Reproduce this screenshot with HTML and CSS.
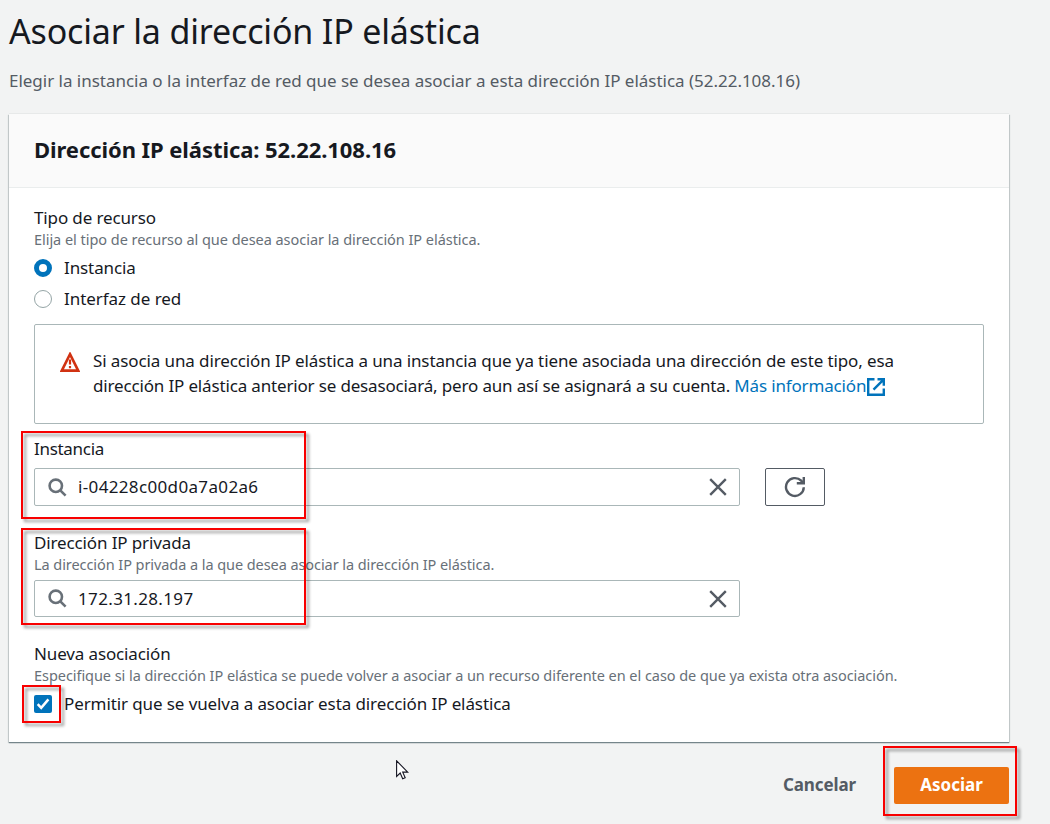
FILE: index.html
```html
<!DOCTYPE html>
<html lang="es">
<head>
<meta charset="utf-8">
<title>Asociar la dirección IP elástica</title>
<link rel="stylesheet" href="styles.css">
</head>
<body>
<main class="page">
  <h1 class="title"><span>Asociar la dirección IP elástica</span></h1>
  <p class="subtitle"><span>Elegir la instancia o la interfaz de red que se desea asociar a esta dirección IP elástica (52.22.108.16)</span></p>

  <section class="card">
    <header class="card-header"><h2><span>Dirección IP elástica: 52.22.108.16</span></h2></header>
    <div class="card-body">
      <div class="label"><span>Tipo de recurso</span></div>
      <div class="hint"><span>Elija el tipo de recurso al que desea asociar la dirección IP elástica.</span></div>
      <div class="option"><i class="radio radio-on"></i><span>Instancia</span></div>
      <div class="option"><i class="radio"></i><span>Interfaz de red</span></div>

      <div class="alert">
        <svg class="alert-icon" width="20" height="20" viewBox="0 0 20 20"><path d="M10 2.2 18.2 18.6H1.8Z" fill="none" stroke="#d13212" stroke-width="2.6"/><path d="M10 7.5v5M10 14v2.3" stroke="#d13212" stroke-width="2.2"/></svg>
        <p class="alert-text"><span class="line1">Si asocia una dirección IP elástica a una instancia que ya tiene asociada una dirección de este tipo, esa</span><br><span class="line2">dirección IP elástica anterior se desasociará, pero aun así se asignará a su cuenta. </span><a class="link"><span>Más información</span><svg width="18" height="18" viewBox="0 0 18 18" fill="none" stroke="#0073bb" stroke-width="2.4"><path d="M7.5 1.3H1.2v15.5h15.6v-6.3"/><path d="M10.5 1.3h6.3v6.4M16.5 1.6 6.5 11.6"/></svg></a></p>
      </div>

      <div class="label label-instance"><span>Instancia</span></div>
      <div class="input-row">
        <div class="input">
          <svg class="search" width="19" height="19" viewBox="0 0 19 19" fill="none" stroke="#687078" stroke-width="2.6"><circle cx="7.8" cy="7.8" r="6.2"/><path d="m12.3 12.3 5.3 5.3"/></svg>
          <span class="value value-id">i-04228c00d0a7a02a6</span>
          <svg class="clear" width="18" height="18" viewBox="0 0 18 18" stroke="#545b64" stroke-width="2.4"><path d="m1.2 1.2 15.6 15.6M16.8 1.2 1.2 16.8"/></svg>
        </div>
        <button class="refresh"><svg width="22" height="22" viewBox="0 0 22 22" fill="none" stroke="#545b64" stroke-width="2.4"><path d="M19.8 11.2a8.9 8.9 0 1 1-2.6-6.5l1.8 2"/><path d="M19.8 1v6.2h-7"/></svg></button>
      </div>

      <div class="label label-private"><span>Dirección IP privada</span></div>
      <div class="hint hint-private"><span>La dirección IP privada a la que desea asociar la dirección IP elástica.</span></div>
      <div class="input input-private">
        <svg class="search" width="19" height="19" viewBox="0 0 19 19" fill="none" stroke="#687078" stroke-width="2.6"><circle cx="7.8" cy="7.8" r="6.2"/><path d="m12.3 12.3 5.3 5.3"/></svg>
        <span class="value value-ip">172.31.28.197</span>
        <svg class="clear" width="18" height="18" viewBox="0 0 18 18" stroke="#545b64" stroke-width="2.4"><path d="m1.2 1.2 15.6 15.6M16.8 1.2 1.2 16.8"/></svg>
      </div>

      <div class="label label-new"><span>Nueva asociación</span></div>
      <div class="hint hint-new"><span>Especifique si la dirección IP elástica se puede volver a asociar a un recurso diferente en el caso de que ya exista otra asociación.</span></div>
      <div class="option option-check"><svg class="checkbox" width="18" height="18" viewBox="0 0 18 18"><rect width="18" height="18" rx="2" fill="#0073bb"/><path d="m3.7 9.2 3.5 3.6 7.2-8.4" fill="none" stroke="#fff" stroke-width="2.5"/></svg><span>Permitir que se vuelva a asociar esta dirección IP elástica</span></div>
    </div>
  </section>

  <footer class="actions">
    <a class="cancel"><span>Cancelar</span></a>
    <button class="primary"><span>Asociar</span></button>
  </footer>
</main>

<div class="mark mark-instance"></div>
<div class="mark mark-private"></div>
<div class="mark mark-check"></div>
<div class="mark mark-submit"></div>
<svg class="cursor" width="13" height="20" viewBox="0 0 13 20"><path d="M.6.8v15.6l3.6-3.4 2.5 5.8 2.5-1-2.5-5.7h5Z" fill="#fff" stroke="#151522" stroke-width="1.1"/></svg>
</body>
</html>
```
FILE: styles.css
```css
* { box-sizing: border-box; }
body {
  margin: 0;
  height: 824px;
  overflow: hidden;
  background: #f2f3f3;
  color: #16191f;
  font: 17px/22px "Noto Sans", sans-serif;
  white-space: nowrap;
}
h1, h2, p { margin: 0; font-weight: 400; }
button { font: inherit; padding: 0; cursor: pointer; }
svg { display: block; flex: none; }

.page { width: 1009px; padding-left: 9px; }
.title { height: 62px; font-size: 34px; line-height: 62px; letter-spacing: -0.17px; }
.subtitle { height: 52px; padding-top: 8px; color: #545b64; letter-spacing: -0.02px; }

.card {
  height: 628px;
  background: #fff;
  box-shadow: 0 1px 1px #75858a, 1px 1px 1px #d0d5d5, -1px 1px 1px #d0d5d5, 0 -1px 0 #e7e9e9;
}
.card-header { height: 74px; background: #fafafa; border-bottom: 1px solid #eaeded; padding: 21px 25px 0; }
.card-header h2 { font-size: 22px; line-height: 28px; font-weight: 700; letter-spacing: -0.07px; }
.card-body { padding: 19px 25px 0; }

.label { letter-spacing: -0.13px; }
.hint { height: 22px; line-height: 20px; color: #687078; font-size: 14.5px; letter-spacing: -0.04px; }
.hint-private { letter-spacing: -0.07px; }
.hint-new { letter-spacing: -0.055px; }
.label-instance { margin-top: 14px; letter-spacing: -0.3px; }
.label-private, .label-new { margin-top: 26px; }

.option { display: flex; align-items: center; gap: 12px; height: 31px; letter-spacing: -0.1px; }
.hint + .option { margin-top: 2px; height: 30px; }
.option + .option { height: 32px; letter-spacing: -0.05px; }
.radio { width: 18px; height: 18px; border: 1px solid #95a5a6; border-radius: 50%; background: #fff; }
.radio-on { border: 5px solid #0073bb; }

.alert { display: flex; gap: 13px; height: 100px; margin-top: 9px; padding: 23px 25px; border: 1px solid #aab7b8; border-radius: 2px; }
.alert-icon { margin-top: 4px; }
.alert-text { line-height: 25px; letter-spacing: -0.11px; white-space: pre; }
.line2 { letter-spacing: -0.16px; }
.link { color: #0073bb; letter-spacing: -0.16px; }
.link svg { display: inline-block; vertical-align: -4px; margin-left: 1px; }

.input-row { display: flex; gap: 25px; margin-top: 8px; }
.input { display: flex; align-items: center; width: 706px; height: 38px; padding: 0 12px 0 13px; border: 1px solid #aab7b8; border-radius: 2px; background: #fff; }
.input-private { height: 37px; margin-top: 4px; }
.value { flex: 1; margin-left: 11px; letter-spacing: 0.35px; }
.refresh { display: flex; align-items: center; justify-content: center; width: 60px; height: 38px; background: #fff; border: 1px solid #545b64; border-radius: 2px; }

.actions { display: flex; justify-content: flex-end; align-items: center; gap: 38px; height: 37px; margin-top: 25px; font-weight: 700; }
.actions span { display: block; padding-bottom: 2px; }
.cancel { color: #545b64; letter-spacing: -0.1px; }
.primary { width: 115px; height: 37px; border: 0; border-radius: 2px; background: #ec7211; color: #fff; font-weight: 700; }

.mark { position: absolute; border: 2px solid #f80000; filter: drop-shadow(3px 3px 1.5px rgba(0, 0, 0, .4)); }
.mark-instance { left: 21px; top: 431px; width: 285px; height: 88px; }
.mark-private { left: 21px; top: 528px; width: 285px; height: 97px; }
.mark-check { left: 22px; top: 685px; width: 39px; height: 38px; }
.mark-submit { left: 883px; top: 746px; width: 134px; height: 70px; }
.cursor { position: absolute; left: 396px; top: 760px; }
```
